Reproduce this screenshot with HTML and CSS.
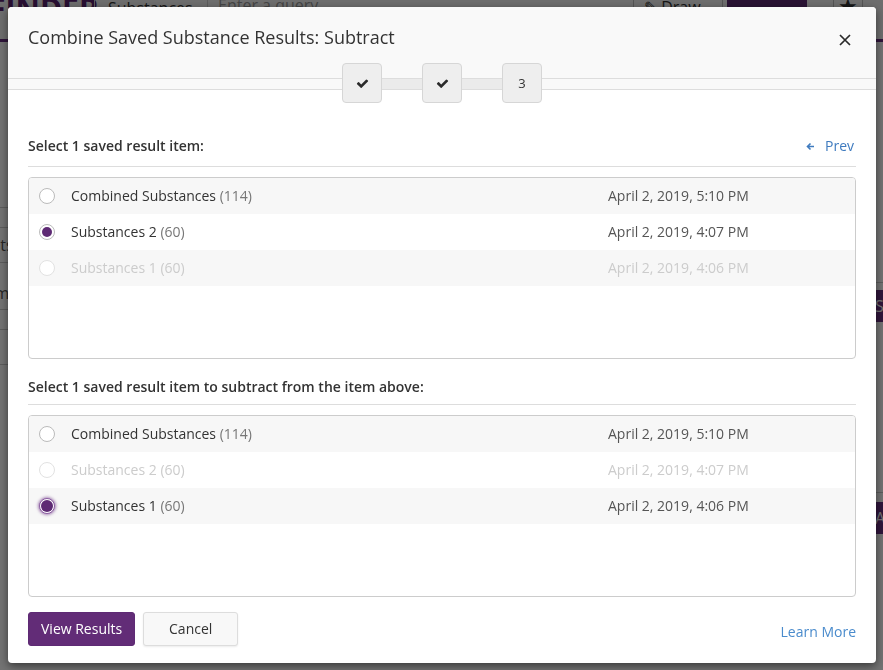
FILE: index.html
```html
<!DOCTYPE html>
<html lang="en">
<head>
    <meta charset="UTF-8" />
    <meta name="viewport" content="width=device-width, initial-scale=1" />
    <title>Combine Saved Substance Results</title>
    <link rel="stylesheet" href="styles.css">
</head>
<body>
    <div class="page">
        <div class="topbar">
            <div class="logo">SciFINDER</div>
            <div class="search-type">Substances</div>
            <div class="query">Enter a query</div>
            <div class="draw-btn">&#9998; Draw</div>
            <div class="search-btn"></div>
            <div class="star-btn">&#9733;</div>
        </div>
        <div class="page-main">
            <div class="sidebar">
                <div class="side-row short"></div>
                <div class="side-row">Results</div>
                <div class="side-row tall">Form</div>
                <div class="side-row short"></div>
                <div class="side-row"></div>
            </div>
            <div class="content">
                <div class="content-row"><span class="page-btn">Save</span></div>
                <div class="content-row"><span class="page-btn">Add</span></div>
            </div>
        </div>
    </div>
    <div class="backdrop"></div>

    <div class="modal">
        <div class="modal-header">
            <div class="title-row">
                <h1 class="modal-title">Combine Saved Substance Results: Subtract</h1>
                <button class="close-btn" aria-label="Close">
                    <svg width="14" height="14" viewBox="0 0 14 14">
                        <path d="M2 2 L12 12 M12 2 L2 12" stroke="#2a2a2a" stroke-width="1.7" fill="none"/>
                    </svg>
                </button>
            </div>
            <div class="stepper">
                <div class="step">
                    <svg class="check" width="13" height="13" viewBox="0 0 1792 1792"><path d="M1671 566q0 40-28 68l-724 724-136 136q-28 28-68 28t-68-28l-136-136-362-362q-28-28-28-68t28-68l136-136q28-28 68-28t68 28l294 295 656-657q28-28 68-28t68 28l136 136q28 28 28 68z"/></svg>
                </div>
                <div class="connector"></div>
                <div class="step">
                    <svg class="check" width="13" height="13" viewBox="0 0 1792 1792"><path d="M1671 566q0 40-28 68l-724 724-136 136q-28 28-68 28t-68-28l-136-136-362-362q-28-28-28-68t28-68l136-136q28-28 68-28t68 28l294 295 656-657q28-28 68-28t68 28l136 136q28 28 28 68z"/></svg>
                </div>
                <div class="connector"></div>
                <div class="step step-current">3</div>
            </div>
        </div>

        <div class="modal-body">
            <div class="section-head first">
                <span class="section-label">Select 1 saved result item:</span>
                <a class="prev-link" href="#">
                    <svg width="9" height="9" viewBox="0 0 9 9"><path d="M8 4.5 H1.5 M4.5 1.5 L1.5 4.5 L4.5 7.5" stroke="#3f7bbf" stroke-width="1.6" fill="none"/></svg>
                    Prev
                </a>
            </div>
            <div class="result-list">
                <div class="result-row">
                    <span class="radio"></span>
                    <span class="name">Combined Substances <span class="count">(114)</span></span>
                    <span class="date">April 2, 2019, 5:10 PM</span>
                </div>
                <div class="result-row">
                    <span class="radio checked"></span>
                    <span class="name">Substances 2 <span class="count">(60)</span></span>
                    <span class="date">April 2, 2019, 4:07 PM</span>
                </div>
                <div class="result-row disabled">
                    <span class="radio"></span>
                    <span class="name">Substances 1 <span class="count">(60)</span></span>
                    <span class="date">April 2, 2019, 4:06 PM</span>
                </div>
            </div>

            <div class="section-head second">
                <span class="section-label">Select 1 saved result item to subtract from the item above:</span>
            </div>
            <div class="result-list">
                <div class="result-row">
                    <span class="radio"></span>
                    <span class="name">Combined Substances <span class="count">(114)</span></span>
                    <span class="date">April 2, 2019, 5:10 PM</span>
                </div>
                <div class="result-row disabled">
                    <span class="radio"></span>
                    <span class="name">Substances 2 <span class="count">(60)</span></span>
                    <span class="date">April 2, 2019, 4:07 PM</span>
                </div>
                <div class="result-row">
                    <span class="radio checked focused"></span>
                    <span class="name">Substances 1 <span class="count">(60)</span></span>
                    <span class="date">April 2, 2019, 4:06 PM</span>
                </div>
            </div>

            <div class="modal-footer">
                <button class="btn btn-primary">View Results</button>
                <button class="btn btn-default">Cancel</button>
                <a class="learn-more" href="#">Learn More</a>
            </div>
        </div>
    </div>
</body>
</html>
```

FILE: styles.css
```css
* {
    box-sizing: border-box;
}
body {
    margin: 0;
    width: 883px;
    height: 670px;
    overflow: hidden;
    font-family: 'Open Sans', 'Liberation Sans', sans-serif;
    font-size: 14px;
    color: #333;
    background: #fff;
}

/* page behind the dialog */
.page {
    height: 670px;
    overflow: hidden;
    background: #fff;
}
.topbar {
    height: 42px;
    display: flex;
    align-items: flex-start;
    border-bottom: 3px solid #6b3283;
    background: #f4f4f4;
}
.logo {
    margin-left: -52px;
    margin-top: -12px;
    font-size: 30px;
    font-weight: 700;
    color: #5a2370;
    width: 150px;
}
.search-type {
    margin-left: -4px;
    width: 114px;
    height: 24px;
    border-left: 1px solid #ccc;
    border-right: 1px solid #ccc;
    padding: 0 13px;
    font-size: 16px;
    line-height: 28px;
    margin-top: -6px;
}
.query {
    flex: 1;
    padding: 0 10px;
    font-size: 16px;
    line-height: 26px;
    margin-top: -8px;
    color: #999;
}
.draw-btn {
    width: 90px;
    height: 26px;
    margin-top: -10px;
    border: 1px solid #bbb;
    border-radius: 3px;
    padding: 0 10px;
    font-size: 16px;
    line-height: 32px;
}
.search-btn {
    width: 80px;
    height: 28px;
    margin: -10px 0 0 4px;
    background: #5e2a74;
    border-radius: 0 3px 3px 0;
}
.star-btn {
    width: 30px;
    height: 28px;
    margin: -10px 20px 0 26px;
    border: 1px solid #bbb;
    border-radius: 3px;
    text-align: center;
    font-size: 22px;
    line-height: 28px;
}
.page-main {
    display: flex;
}
.sidebar {
    width: 220px;
    margin-top: 165px;
    border-top: 1px solid #ccc;
}
.side-row {
    height: 35px;
    border-bottom: 1px solid #ccc;
    text-indent: -40px;
    font-size: 16px;
    line-height: 35px;
    color: #555;
}
.side-row.short {
    height: 20px;
}
.side-row.tall {
    height: 47px;
    line-height: 60px;
    text-indent: -30px;
}
.content {
    flex: 1;
    margin-top: 240px;
}
.content-row {
    height: 210px;
    border-top: 1px solid #ccc;
    display: flex;
    justify-content: flex-end;
    padding-top: 7px;
}
.content-row + .content-row {
    padding-top: 9px;
}
.page-btn {
    height: 32px;
    width: 60px;
    margin-right: -50px;
    padding-left: 2px;
    background: #6b3283;
    color: #fff;
    border-radius: 3px;
    font-size: 16px;
    line-height: 32px;
}
.backdrop {
    position: fixed;
    inset: 0;
    background: rgba(0, 0, 0, 0.55);
}

/* dialog */
.modal {
    position: absolute;
    top: 7px;
    left: 8px;
    width: 868px;
    height: 656px;
    background: #fff;
    border-radius: 4px;
    box-shadow: 0 3px 9px rgba(0, 0, 0, 0.5);
}
.modal-header {
    background: #f9f9f9;
    border-radius: 4px 4px 0 0;
}
.title-row {
    height: 71px;
    padding: 18px 24px 0 20px;
    display: flex;
    justify-content: space-between;
    align-items: flex-start;
}
.modal-title {
    margin: 0;
    font-size: 18px;
    font-weight: 400;
    line-height: 24px;
    color: #333;
}
.close-btn {
    margin-top: 8px;
    width: 14px;
    height: 14px;
    padding: 0;
    border: none;
    background: none;
    cursor: pointer;
}
.close-btn svg {
    display: block;
}
.stepper {
    height: 12px;
    border-top: 1px solid #ddd;
    border-bottom: 1px solid #ddd;
    display: flex;
    justify-content: center;
    align-items: center;
    background: #f9f9f9;
}
.step {
    flex: none;
    width: 40px;
    height: 40px;
    margin-top: -2px;
    border: 1px solid #d6d6d6;
    border-radius: 4px;
    background: #eee;
    display: flex;
    align-items: center;
    justify-content: center;
    font-size: 13px;
    color: #333;
}
.check path {
    fill: #2b2b2b;
}
.connector {
    flex: none;
    width: 40px;
    height: 10px;
    background: #ebebeb;
}

.modal-body {
    padding: 0 20px;
}
.section-head {
    display: flex;
    justify-content: space-between;
    align-items: center;
    line-height: 20px;
    border-bottom: 1px solid #ddd;
}
.section-head.first {
    margin-top: 46px;
    padding-bottom: 10px;
}
.section-head.second {
    margin-top: 18px;
    padding-bottom: 7px;
}
.section-label {
    font-weight: 600;
    color: #333;
}
.prev-link {
    color: #3f7bbf;
    text-decoration: none;
    display: flex;
    align-items: center;
    gap: 10px;
    margin-right: 2px;
}
.result-list {
    margin-top: 10px;
    height: 182px;
    border: 1px solid #ccc;
    border-radius: 4px;
    overflow: hidden;
}
.result-row {
    height: 36px;
    padding: 0 0 2px 10px;
    display: grid;
    grid-template-columns: 16px 521px auto;
    column-gap: 16px;
    align-items: center;
    color: #333;
}
.result-row:nth-child(odd) {
    background: #f7f7f7;
}
.count {
    color: #777;
}
.date {
    color: #555;
}
.result-row.disabled .name,
.result-row.disabled .count,
.result-row.disabled .date {
    color: #ccc;
}
.radio {
    width: 16px;
    height: 16px;
    margin-top: 2px;
    border-radius: 50%;
    border: 1px solid #bbb;
    background: #fff;
    position: relative;
}
.result-row.disabled .radio {
    border-color: #e2e2e2;
}
.radio.checked::after {
    content: "";
    position: absolute;
    top: 2px;
    left: 2px;
    width: 10px;
    height: 10px;
    border-radius: 50%;
    background: #5e2a74;
}
.radio.focused {
    border-color: #8a5aa0;
    box-shadow: 0 0 3px 1px rgba(106, 50, 131, 0.6);
}
.radio.focused::after {
    top: 1px;
    left: 1px;
    width: 12px;
    height: 12px;
}

.modal-footer {
    margin-top: 15px;
    display: flex;
    align-items: center;
}
.btn {
    height: 34px;
    padding-bottom: 2px;
    font-family: inherit;
    font-size: 14px;
    border-radius: 3px;
    cursor: pointer;
}
.btn-primary {
    padding-left: 12px;
    padding-right: 12px;
    border: 1px solid #5e2a74;
    background: #622c77;
    color: #fff;
}
.btn-default {
    margin-left: 8px;
    width: 95px;
    border: 1px solid #ddd;
    background: #f8f8f8;
    color: #333;
    box-shadow: 0 1px 2px rgba(0, 0, 0, 0.08);
}
.learn-more {
    margin-left: auto;
    margin-top: 4px;
    color: #4a8bcc;
    text-decoration: none;
}
```
